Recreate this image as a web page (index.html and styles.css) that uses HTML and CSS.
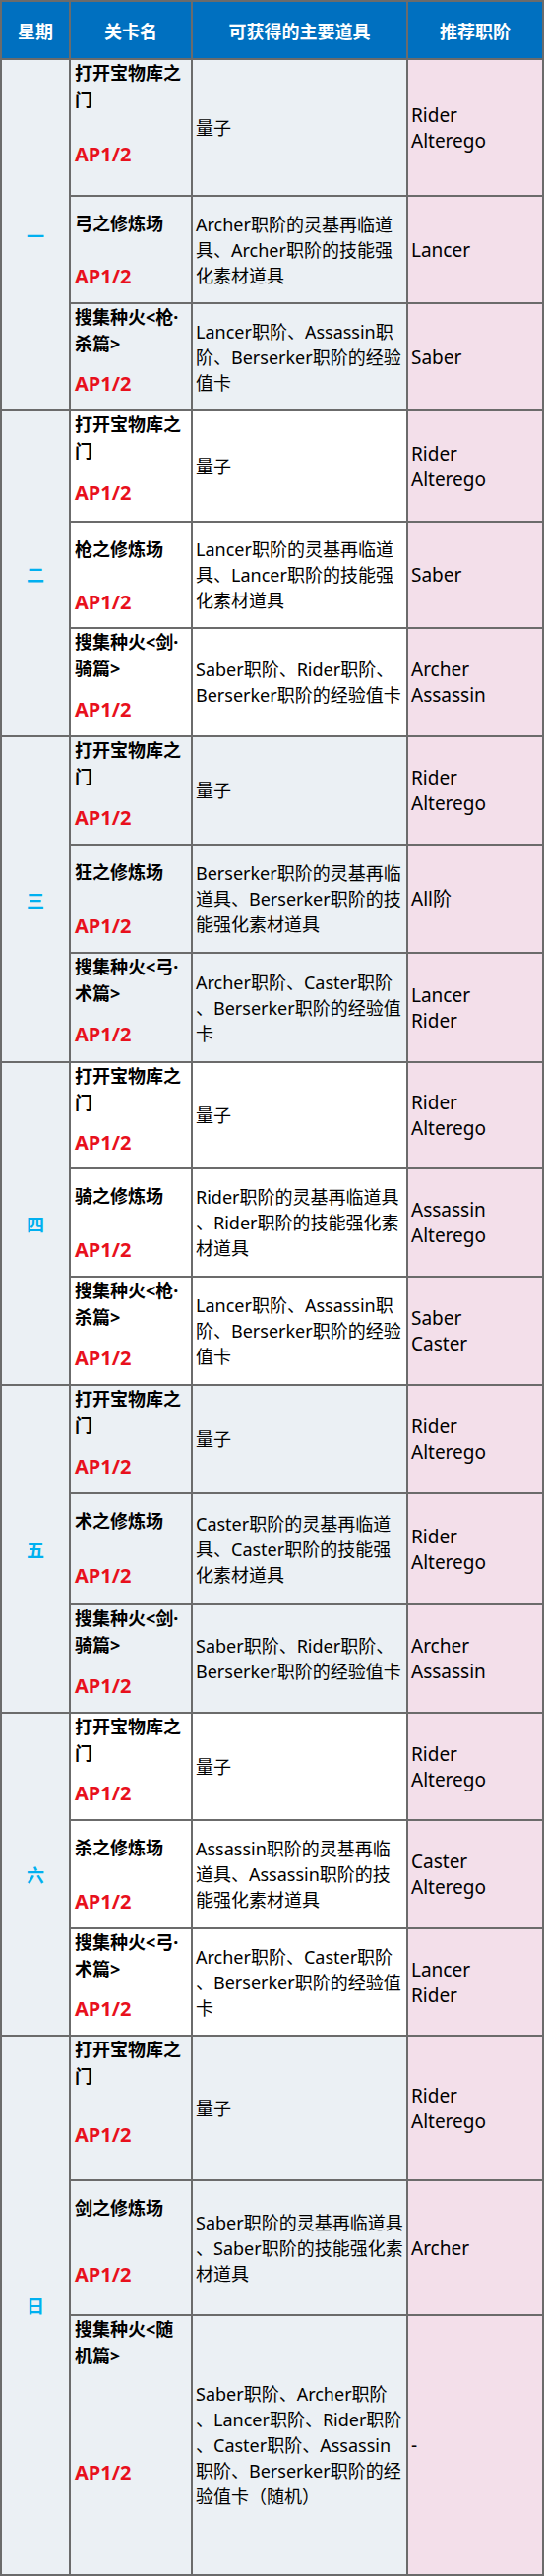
FILE: index.html
```html
<!DOCTYPE html>
<html lang="zh-CN">
<head>
<meta charset="utf-8">
<title>每日关卡</title>
<link rel="stylesheet" href="styles.css">
</head>
<body>
<div class="grid">
  <div class="th">星期</div>
  <div class="th">关卡名</div>
  <div class="th">可获得的主要道具</div>
  <div class="th">推荐职阶</div>

  <div class="day">一</div>
  <div class="stage alt"><div class="nm">打开宝物库之<br>门</div><div class="ap">AP1/2</div></div>
  <div class="item alt">量子</div>
  <div class="cls">Rider<br>Alterego</div>
  <div class="stage alt"><div class="nm">弓之修炼场</div><div class="ap">AP1/2</div></div>
  <div class="item alt">Archer职阶的灵基再临道<br>具、Archer职阶的技能强<br>化素材道具</div>
  <div class="cls">Lancer</div>
  <div class="stage alt"><div class="nm">搜集种火&lt;枪·<br>杀篇&gt;</div><div class="ap">AP1/2</div></div>
  <div class="item alt">Lancer职阶、Assassin职<br>阶、Berserker职阶的经验<br>值卡</div>
  <div class="cls">Saber</div>

  <div class="day">二</div>
  <div class="stage"><div class="nm">打开宝物库之<br>门</div><div class="ap">AP1/2</div></div>
  <div class="item">量子</div>
  <div class="cls">Rider<br>Alterego</div>
  <div class="stage"><div class="nm">枪之修炼场</div><div class="ap">AP1/2</div></div>
  <div class="item">Lancer职阶的灵基再临道<br>具、Lancer职阶的技能强<br>化素材道具</div>
  <div class="cls">Saber</div>
  <div class="stage"><div class="nm">搜集种火&lt;剑·<br>骑篇&gt;</div><div class="ap">AP1/2</div></div>
  <div class="item">Saber职阶、Rider职阶、<br>Berserker职阶的经验值卡</div>
  <div class="cls">Archer<br>Assassin</div>

  <div class="day">三</div>
  <div class="stage alt"><div class="nm">打开宝物库之<br>门</div><div class="ap">AP1/2</div></div>
  <div class="item alt">量子</div>
  <div class="cls">Rider<br>Alterego</div>
  <div class="stage alt"><div class="nm">狂之修炼场</div><div class="ap">AP1/2</div></div>
  <div class="item alt">Berserker职阶的灵基再临<br>道具、Berserker职阶的技<br>能强化素材道具</div>
  <div class="cls">All阶</div>
  <div class="stage alt"><div class="nm">搜集种火&lt;弓·<br>术篇&gt;</div><div class="ap">AP1/2</div></div>
  <div class="item alt">Archer职阶、Caster职阶<br>、Berserker职阶的经验值<br>卡</div>
  <div class="cls">Lancer<br>Rider</div>

  <div class="day">四</div>
  <div class="stage"><div class="nm">打开宝物库之<br>门</div><div class="ap">AP1/2</div></div>
  <div class="item">量子</div>
  <div class="cls">Rider<br>Alterego</div>
  <div class="stage"><div class="nm">骑之修炼场</div><div class="ap">AP1/2</div></div>
  <div class="item">Rider职阶的灵基再临道具<br>、Rider职阶的技能强化素<br>材道具</div>
  <div class="cls">Assassin<br>Alterego</div>
  <div class="stage"><div class="nm">搜集种火&lt;枪·<br>杀篇&gt;</div><div class="ap">AP1/2</div></div>
  <div class="item">Lancer职阶、Assassin职<br>阶、Berserker职阶的经验<br>值卡</div>
  <div class="cls">Saber<br>Caster</div>

  <div class="day">五</div>
  <div class="stage alt"><div class="nm">打开宝物库之<br>门</div><div class="ap">AP1/2</div></div>
  <div class="item alt">量子</div>
  <div class="cls">Rider<br>Alterego</div>
  <div class="stage alt"><div class="nm">术之修炼场</div><div class="ap">AP1/2</div></div>
  <div class="item alt">Caster职阶的灵基再临道<br>具、Caster职阶的技能强<br>化素材道具</div>
  <div class="cls">Rider<br>Alterego</div>
  <div class="stage alt"><div class="nm">搜集种火&lt;剑·<br>骑篇&gt;</div><div class="ap">AP1/2</div></div>
  <div class="item alt">Saber职阶、Rider职阶、<br>Berserker职阶的经验值卡</div>
  <div class="cls">Archer<br>Assassin</div>

  <div class="day">六</div>
  <div class="stage"><div class="nm">打开宝物库之<br>门</div><div class="ap">AP1/2</div></div>
  <div class="item">量子</div>
  <div class="cls">Rider<br>Alterego</div>
  <div class="stage"><div class="nm">杀之修炼场</div><div class="ap">AP1/2</div></div>
  <div class="item">Assassin职阶的灵基再临<br>道具、Assassin职阶的技<br>能强化素材道具</div>
  <div class="cls">Caster<br>Alterego</div>
  <div class="stage"><div class="nm">搜集种火&lt;弓·<br>术篇&gt;</div><div class="ap">AP1/2</div></div>
  <div class="item">Archer职阶、Caster职阶<br>、Berserker职阶的经验值<br>卡</div>
  <div class="cls">Lancer<br>Rider</div>

  <div class="day">日</div>
  <div class="stage alt"><div class="nm">打开宝物库之<br>门</div><div class="ap">AP1/2</div></div>
  <div class="item alt">量子</div>
  <div class="cls">Rider<br>Alterego</div>
  <div class="stage alt"><div class="nm">剑之修炼场</div><div class="ap">AP1/2</div></div>
  <div class="item alt">Saber职阶的灵基再临道具<br>、Saber职阶的技能强化素<br>材道具</div>
  <div class="cls">Archer</div>
  <div class="stage alt"><div class="nm">搜集种火&lt;随<br>机篇&gt;</div><div class="ap">AP1/2</div></div>
  <div class="item alt">Saber职阶、Archer职阶<br>、Lancer职阶、Rider职阶<br>、Caster职阶、Assassin<br>职阶、Berserker职阶的经<br>验值卡（随机）</div>
  <div class="cls">-</div>
</div>
</body>
</html>
```

FILE: styles.css
```css
html, body {
  margin: 0;
  padding: 0;
  background: #ffffff;
}

body {
  font-family: "Noto Sans", "Noto Sans CJK SC", sans-serif;
  color: #000;
}

.grid {
  width: 553px;
  box-sizing: border-box;
  display: grid;
  grid-template-columns: 68px 122px 217px 136px;
  grid-template-rows:
    57px
    137px 107px 107px
    111px 106px 108px
    108px 108px 109px
    106px 108px 108px
    108px 111px 108px
    107px 108px 107px
    145px 135px 262px;
  gap: 2px;
  padding: 2px;
  background: #6b6b6b;
}

.th {
  background: #0070c0;
  color: #ffffff;
  font-weight: bold;
  font-size: 18px;
  display: flex;
  align-items: center;
  justify-content: center;
}

.day {
  grid-column: 1;
  grid-row: span 3;
  background: #ebf0f4;
  color: #00b0f0;
  font-weight: bold;
  font-size: 18px;
  display: flex;
  align-items: center;
  justify-content: center;
}

.stage {
  background: #ffffff;
  display: flex;
  flex-direction: column;
  padding: 0 2px 0 4px;
}

.item {
  background: #ffffff;
  display: flex;
  align-items: center;
  padding: 0 0 0 3px;
  font-size: 18px;
  line-height: 26px;
  white-space: nowrap;
  overflow: hidden;
}

.alt {
  background: #ebf0f4;
}

.nm {
  height: 54px;
  display: flex;
  align-items: center;
  font-weight: bold;
  font-size: 18px;
  line-height: 27px;
}

.ap {
  flex: 1;
  display: flex;
  align-items: center;
  color: #e8101c;
  font-weight: bold;
  font-size: 20px;
}

.cls {
  background: #f3dfea;
  display: flex;
  align-items: center;
  padding: 0 0 0 3px;
  font-size: 19px;
  line-height: 26px;
}
```
